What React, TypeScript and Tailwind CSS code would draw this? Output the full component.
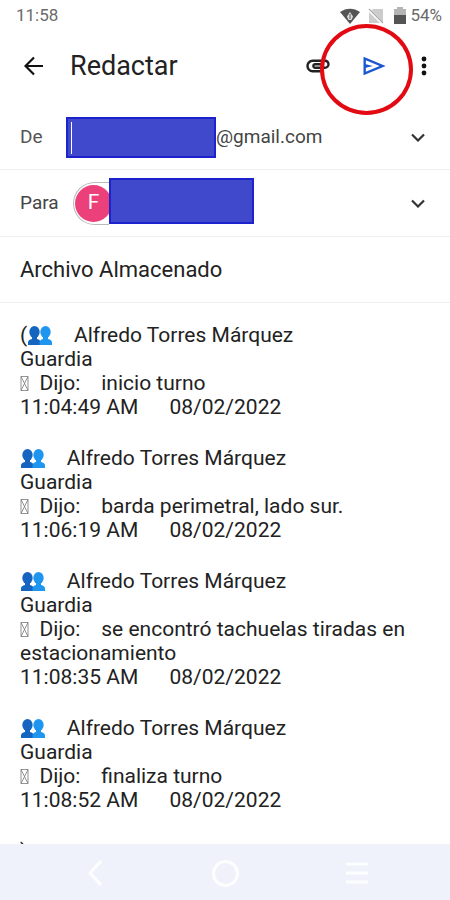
import type { ReactNode } from "react";

interface Entry {
  id: string;
  message: string;
  time: string;
  date: string;
}

const entries: Entry[] = [
  { id: "1", message: "inicio turno", time: "11:04:49 AM", date: "08/02/2022" },
  { id: "2", message: "barda perimetral, lado sur.", time: "11:06:19 AM", date: "08/02/2022" },
  { id: "3", message: "se encontró tachuelas tiradas en estacionamiento", time: "11:08:35 AM", date: "08/02/2022" },
  { id: "4", message: "finaliza turno", time: "11:08:52 AM", date: "08/02/2022" },
];

function PeopleIcon() {
  return (
    <svg viewBox="-1 0 26 21" className="inline-block h-[21px] w-[26px] align-[-4px]" aria-hidden="true">
      <g fill="#1565c0">
        <ellipse cx="6.5" cy="7" rx="5.2" ry="6" />
        <path d="M0 20v-2.500c0-2 1.500-3 4-3.500V11h5v3c2.500.5 3.500 1.500 3.500 3.500V20z" />
      </g>
      <g fill="#1e96f0">
        <ellipse cx="17.500" cy="7" rx="5.2" ry="6" />
        <path d="M11.500 20v-2.500c0-2 1.500-3 3.500-3.500v-3h5v3c2.500.5 4 1.500 4 3.500V20z" />
      </g>
    </svg>
  );
}

/* Box shown by the phone for a symbol it has no glyph for */
function MissingGlyph() {
  return (
    <svg viewBox="0 0 9 15" className="inline-block h-[15px] w-[9px] align-[-1px]" fill="none" stroke="#777" aria-hidden="true">
      <path d="M1 .5h7v14H1zM1 .5l7 14M8 .5l-7 14" strokeWidth=".8" />
    </svg>
  );
}

function ExpandButton({ label }: { label: string }) {
  return (
    <button type="button" aria-label={label} className="ml-auto flex h-8 w-8 items-center justify-center">
      <svg viewBox="0 0 14 9" className="h-[9px] w-[14px]" fill="none" stroke="#333" strokeWidth="2.200">
        <path d="M1 1.500l6 6 6-6" />
      </svg>
    </button>
  );
}

function Row({ children, className }: { children: ReactNode; className: string }) {
  return (
    <div className={`flex shrink-0 items-center border-b border-[#eeeeee] pl-5 pr-4 ${className}`}>{children}</div>
  );
}

function StatusBar() {
  return (
    <div className="flex h-[30px] shrink-0 items-center pl-4 pr-2 pt-px text-[#6a6a6a]">
      <span className="text-[17px]">11:58</span>
      <div className="ml-auto flex items-center">
        <svg viewBox="0 0 20 16" className="h-4 w-5" aria-hidden="true">
          <path d="M0 4C6-.5 14-.5 20 4L10 16z" fill="#555" />
          <path d="M10 4l3 4.500-1.500 3.500h-3L7 8.500z" fill="#ddd" />
          <path d="M10 6v5" stroke="#555" />
        </svg>
        <svg viewBox="0 0 16 16" className="ml-2 h-4 w-4" aria-hidden="true">
          <path d="M5 1h10v14H1V5z" fill="#ccc" />
          <path d="M0 1l15 15" stroke="#fff" strokeWidth="3" />
          <path d="M1 1l14 14" stroke="#aaa" strokeWidth="1.200" />
        </svg>
        <svg viewBox="0 0 12 17" className="ml-2.5 h-[17px] w-3" aria-hidden="true">
          <path d="M3 0h6v2h3v7H0V2h3z" fill="#b5b5b5" />
          <path d="M0 8h12v9H0z" fill="#555" />
        </svg>
        <span className="ml-1 text-[17px]">54%</span>
      </div>
    </div>
  );
}

function Toolbar() {
  return (
    <header className="flex h-[72px] shrink-0 items-center pl-5 pr-3">
      <button type="button" aria-label="Atrás" className="flex h-8 w-7 items-center justify-center">
        <svg viewBox="0 0 20 20" className="h-5 w-5" fill="none" stroke="#111" strokeWidth="2.200">
          <path d="M19 10H2M10 1.500L1.500 10l8.500 8.500" />
        </svg>
      </button>
      <h1 className="ml-[22px] text-[27px] leading-8 text-[#222]">Redactar</h1>
      <button type="button" aria-label="Adjuntar archivo" className="ml-auto flex h-8 w-7 items-center justify-center">
        <svg viewBox="2 6.5 20 12" className="h-[14px] w-6" fill="#222">
          <path d="M2 12.500C2 9.460 4.460 7 7.500 7H18c2.210 0 4 1.790 4 4s-1.790 4-4 4H9.500C8.120 15 7 13.880 7 12.500S8.120 10 9.500 10H17v2H9.410c-.55 0-.55 1 0 1H18c1.100 0 2-.9 2-2s-.9-2-2-2H7.500C5.570 9 4 10.570 4 12.500S5.570 16 7.500 16H17v2H7.500C4.460 18 2 15.540 2 12.500z" />
        </svg>
      </button>
      <button type="button" aria-label="Enviar" className="relative ml-[26px] flex h-8 w-8 items-center justify-center">
        <svg viewBox="0 0 24 24" className="h-7 w-7" fill="#1a56d0">
          <path d="M3 20V4l19 8-19 8zm2-3l11.850-5L5 7v3.500l6 1.500-6 1.500V17z" />
        </svg>
        {/* Hand-drawn highlight round the send action */}
        <span className="pointer-events-none absolute -left-[38px] -top-[26px] h-[91px] w-[93px] rounded-[50%] border-4 border-[#e30b13]" />
      </button>
      <button type="button" aria-label="Más opciones" className="ml-5 flex h-8 w-7 items-center justify-center">
        <svg viewBox="0 0 6 20" className="h-5 w-[6px]" fill="#111">
          <circle cx="3" cy="3" r="2.400" />
          <circle cx="3" cy="10" r="2.400" />
          <circle cx="3" cy="17" r="2.400" />
        </svg>
      </button>
    </header>
  );
}

function NavigationBar() {
  return (
    <nav className="flex h-14 shrink-0 items-center justify-around bg-[#eff2fb] pl-[30px] pr-7 pt-0.5">
      <button type="button" aria-label="Volver" className="flex h-10 w-10 items-center justify-center">
        <svg viewBox="0 0 14 26" className="h-[26px] w-[14px]" fill="none" stroke="#fcfefe" strokeWidth="3">
          <path d="M13 1L2 13l11 12" />
        </svg>
      </button>
      <button type="button" aria-label="Inicio" className="flex h-10 w-10 items-center justify-center">
        <span className="h-[27px] w-[27px] rounded-full border-[3px] border-[#fcfefe]" />
      </button>
      <button type="button" aria-label="Recientes" className="flex h-10 w-10 items-center justify-center">
        <svg viewBox="0 0 22 22" className="h-[22px] w-[22px]" stroke="#fcfefe" strokeWidth="3">
          <path d="M0 2h22M0 11h22M0 20h22" />
        </svg>
      </button>
    </nav>
  );
}

export default function App() {
  return (
    <div className="flex h-screen flex-col overflow-hidden bg-white font-[Roboto,'Liberation_Sans',sans-serif]">
      <StatusBar />
      <Toolbar />
      <main className="flex min-h-0 flex-1 flex-col overflow-hidden">
        <Row className="mt-1 h-16">
          <span className="w-[46px] shrink-0 text-[19px] text-[#555]">De</span>
          <span className="flex h-[41px] w-[150px] items-center border-2 border-[#1c22cc] bg-[#4048cc] pl-[3px]">
            <span className="h-8 w-px bg-white" />
          </span>
          <span className="text-[19px] text-[#444]">@gmail.com</span>
          <ExpandButton label="Mostrar remitentes" />
        </Row>
        <Row className="h-[67px]">
          <span className="w-[53px] shrink-0 text-[19px] text-[#444]">Para</span>
          <span className="flex h-[43px] w-9 items-center rounded-l-full border border-r-0 border-[#bbb] pl-px">
            <span className="flex h-[37px] w-[37px] shrink-0 items-center justify-center rounded-full bg-[#ec407a] text-[21px] text-white">
              F
            </span>
          </span>
          <span className="z-10 mb-1 h-[46px] w-[145px] border-2 border-[#1c22cc] bg-[#4048cc]" />
          <ExpandButton label="Mostrar Cc y Cco" />
        </Row>
        <Row className="h-[66px]">
          <input
            aria-label="Asunto"
            defaultValue="Archivo Almacenado"
            className="min-w-0 flex-1 text-[22px] text-[#222] outline-none"
          />
        </Row>
        <div className="px-5 pt-5 text-[21px] leading-6 text-[#222]">
          {entries.map((entry, i) => (
            <div key={entry.id} className="mb-[27px]">
              <p className="whitespace-pre-wrap">
                {i === 0 && "("}
                <PeopleIcon />
                {"    "}Alfredo Torres Márquez
              </p>
              <p>Guardia</p>
              <p className="whitespace-pre-wrap">
                <MissingGlyph />
                {"  "}Dijo:{"    "}
                {entry.message}
              </p>
              <p className="whitespace-pre-wrap">
                {entry.time}
                {"      "}
                {entry.date}
              </p>
            </div>
          ))}
          <p>)</p>
        </div>
      </main>
      <NavigationBar />
    </div>
  );
}
